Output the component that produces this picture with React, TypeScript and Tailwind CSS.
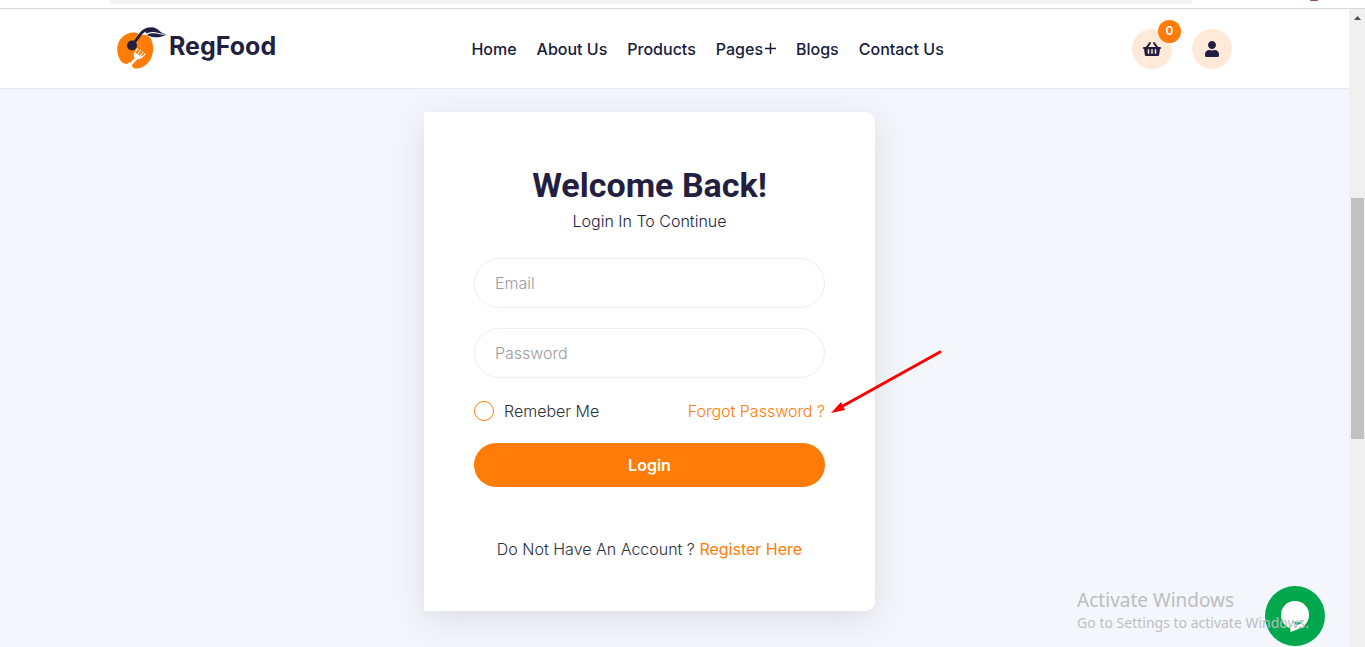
import React from "react";
import { FaShoppingBasket, FaUser } from "react-icons/fa";

const links = ["Home", "About Us", "Products", "Pages", "Blogs", "Contact Us"];

function Logo() {
  return (
    <a href="#" aria-label="RegFood" className="flex items-start gap-[2px] pb-[2px]">
      <svg width="50" height="44" viewBox="0 0 50 44" aria-hidden="true">
        <path
          d="M16 6.5C19 6 21 7 23 9.5C26 8 30 8.500 32.500 11C36 15 37 22 35.500 28C34 35 28 42 20 42.500C16.500 43 14.500 40.500 14.500 37.500L12.500 36C11 38.500 8 38.500 5.500 36.500C1 33 -1 24 1 18C3.500 11 9 7 16 6.500Z"
          fill="#ff7c08"
        />
        <path d="M20.500 31L13.500 38.500" stroke="#fff" strokeWidth="2.600" strokeLinecap="round" />
        <path d="M17.500 26.500C16 29.500 17 32.500 20 33C22.500 33.500 24.500 32.500 25.500 31.500Z" fill="#fff" />
        <path
          d="M17.500 27.500L20.500 22.500M20 29L23.500 24M22.500 30.500L26 26M24.500 31.500L28 28"
          stroke="#fff"
          strokeWidth="1.100"
          strokeLinecap="round"
        />
        <circle cx="15" cy="19.500" r="5" fill="#231f41" />
        <path d="M15 19C20 14 21 11 24 7.500C27 4 30 3 33 3" stroke="#231f41" strokeWidth="2.800" fill="none" />
        <path
          d="M28 3.500C34 -0.500 39 1.500 42 4.500C44 6.500 46 7.800 49.500 8.300C45 8 42 7 38 6.200C35 5.600 32 6 29 7.500Z"
          fill="#231f41"
        />
        <path d="M30 8.800C34 6.800 38 7 42 8C44 8.600 46 8.800 49.500 8.500C44 12 36 12.500 30 8.800Z" fill="#231f41" />
      </svg>
      <span className="pt-[2px] font-['Inter'] text-[25px] leading-[36px] font-bold text-[#231f41]">
        RegFood
      </span>
    </a>
  );
}

function Header() {
  return (
    <header className="border-b border-[#e9ecef] bg-white">
      <div className="mx-auto flex h-[79px] max-w-[1115px] items-center justify-between">
        <Logo />
        <nav className="ml-[7px] flex gap-5 text-[16px] leading-6 font-medium text-[#16203a]">
          {links.map((label) => (
            <a key={label} href="#" className="flex items-center gap-[2px] whitespace-nowrap">
              {label}
              {label === "Pages" && (
                <svg width="11" height="11" viewBox="0 0 11 11" aria-hidden="true">
                  <path d="M5.500 0V11M0 5.500H11" stroke="currentColor" strokeWidth="1.500" />
                </svg>
              )}
            </a>
          ))}
        </nav>
        <div className="flex gap-5">
          <a
            href="#"
            aria-label="Basket"
            className="relative flex size-10 items-center justify-center rounded-full bg-[#ffead9] text-[#231f41]"
          >
            <FaShoppingBasket size={18} />
            <span className="absolute -top-[9px] -right-[9px] flex size-[23px] items-center justify-center rounded-full bg-[#ff7c08] text-[12px] font-semibold text-white">
              0
            </span>
          </a>
          <a
            href="#"
            aria-label="Account"
            className="flex size-10 items-center justify-center rounded-full bg-[#ffead9] text-[#231f41]"
          >
            <FaUser size={16} />
          </a>
        </div>
      </div>
    </header>
  );
}

function Field({ type, label }: { type: string; label: string }) {
  return (
    <input
      type={type}
      aria-label={label}
      placeholder={label}
      className="block h-[50px] w-full rounded-full border border-[#eeeeee] bg-white px-5 text-[16px] font-light text-[#231f41] outline-none placeholder:text-[#9a9ba1]"
    />
  );
}

function LoginCard() {
  return (
    <form
      onSubmit={(e) => e.preventDefault()}
      className="w-full max-w-[451px] rounded-r-[10px] bg-white p-[50px] text-[16px] leading-6 font-light shadow-[0_8px_32px_rgba(80,85,90,0.15)]"
    >
      <h2 className="text-center font-['Roboto'] text-[34px] leading-[47px] font-bold text-[#231f41]">
        Welcome Back!
      </h2>
      <p className="text-center text-[#231f41]">Login In To Continue</p>
      <div className="mt-[25px] flex flex-col gap-5">
        <Field type="email" label="Email" />
        <Field type="password" label="Password" />
      </div>
      <div className="mt-[21px] flex items-center justify-between">
        <label className="flex items-center gap-[10px] text-[#2d2f3a]">
          <input
            type="checkbox"
            className="size-5 appearance-none rounded-full border border-[#ff7c08] checked:bg-[#ff7c08]"
          />
          Remeber Me
        </label>
        <a href="#" className="relative text-[#ff7c08]">
          Forgot Password ?
          <svg
            width="112"
            height="66"
            viewBox="0 0 112 66"
            aria-hidden="true"
            className="pointer-events-none absolute bottom-[10px] left-full ml-[6px]"
          >
            <path d="M10 60L109 5" stroke="#fe0000" strokeWidth="3" strokeLinecap="round" />
            <path d="M0 66L10 55L14 63Z" fill="#fe0000" />
          </svg>
        </a>
      </div>
      <button
        type="submit"
        className="mt-5 h-11 w-full rounded-full bg-[#ff7c08] text-[16px] font-semibold text-white"
      >
        Login
      </button>
      <p className="mt-[50px] text-center text-[#2d2f3a]">
        Do Not Have An Account ?{" "}
        <a href="#" className="font-normal text-[#ff7c08]">
          Register Here
        </a>
      </p>
    </form>
  );
}

export default function App() {
  return (
    <div className="flex min-h-screen flex-col bg-[#f3f6fb] font-['Inter',sans-serif]">
      <div className="flex h-[9px] items-start border-b border-[#d5d6d8] bg-white pr-[47px] pl-[110px]">
        <div className="h-1 flex-1 rounded-b-[12px] bg-[#f1f3f4]" />
        <div className="ml-[117px] h-px w-2 rounded-b-full bg-[#8a4a5c]" />
      </div>
      <div className="flex flex-1">
        <div className="relative flex flex-1 flex-col overflow-hidden">
          <Header />
          <main className="flex justify-center pt-[23px] pr-[50px] pb-9">
            <LoginCard />
          </main>
          <button
            type="button"
            aria-label="Open chat"
            className="absolute right-6 bottom-px flex size-[60px] items-center justify-center rounded-full bg-[#03a84e]"
          >
            <svg width="28" height="31" viewBox="0 0 28 31" aria-hidden="true">
              <circle cx="14" cy="14" r="14" fill="#fff" />
              <path d="M9 25L9.500 31C15 29 20 27 23 24Z" fill="#fff" />
              <path d="M13 20.500Q18 22 22 20Q19 24 15 24Z" fill="#03a84e" />
            </svg>
          </button>
          <div className="pointer-events-none absolute right-10 bottom-[14px] font-['Noto_Sans'] font-normal whitespace-nowrap text-[#bcbec1]">
            <p className="text-[19px] leading-[26px]">Activate Windows</p>
            <p className="text-[14px] leading-5">Go to Settings to activate Windows.</p>
          </div>
        </div>
        <div className="flex w-4 flex-col items-center bg-[#f0f0f0] pt-[7px]" aria-hidden="true">
          <svg width="7" height="4" viewBox="0 0 7 4">
            <path d="M0 4L3.500 0L7 4Z" fill="#505050" />
          </svg>
          <div className="grow-[178]" />
          <div className="w-[13px] grow-[241] bg-[#c1c1c1]" />
          <div className="grow-[208]" />
        </div>
      </div>
    </div>
  );
}
